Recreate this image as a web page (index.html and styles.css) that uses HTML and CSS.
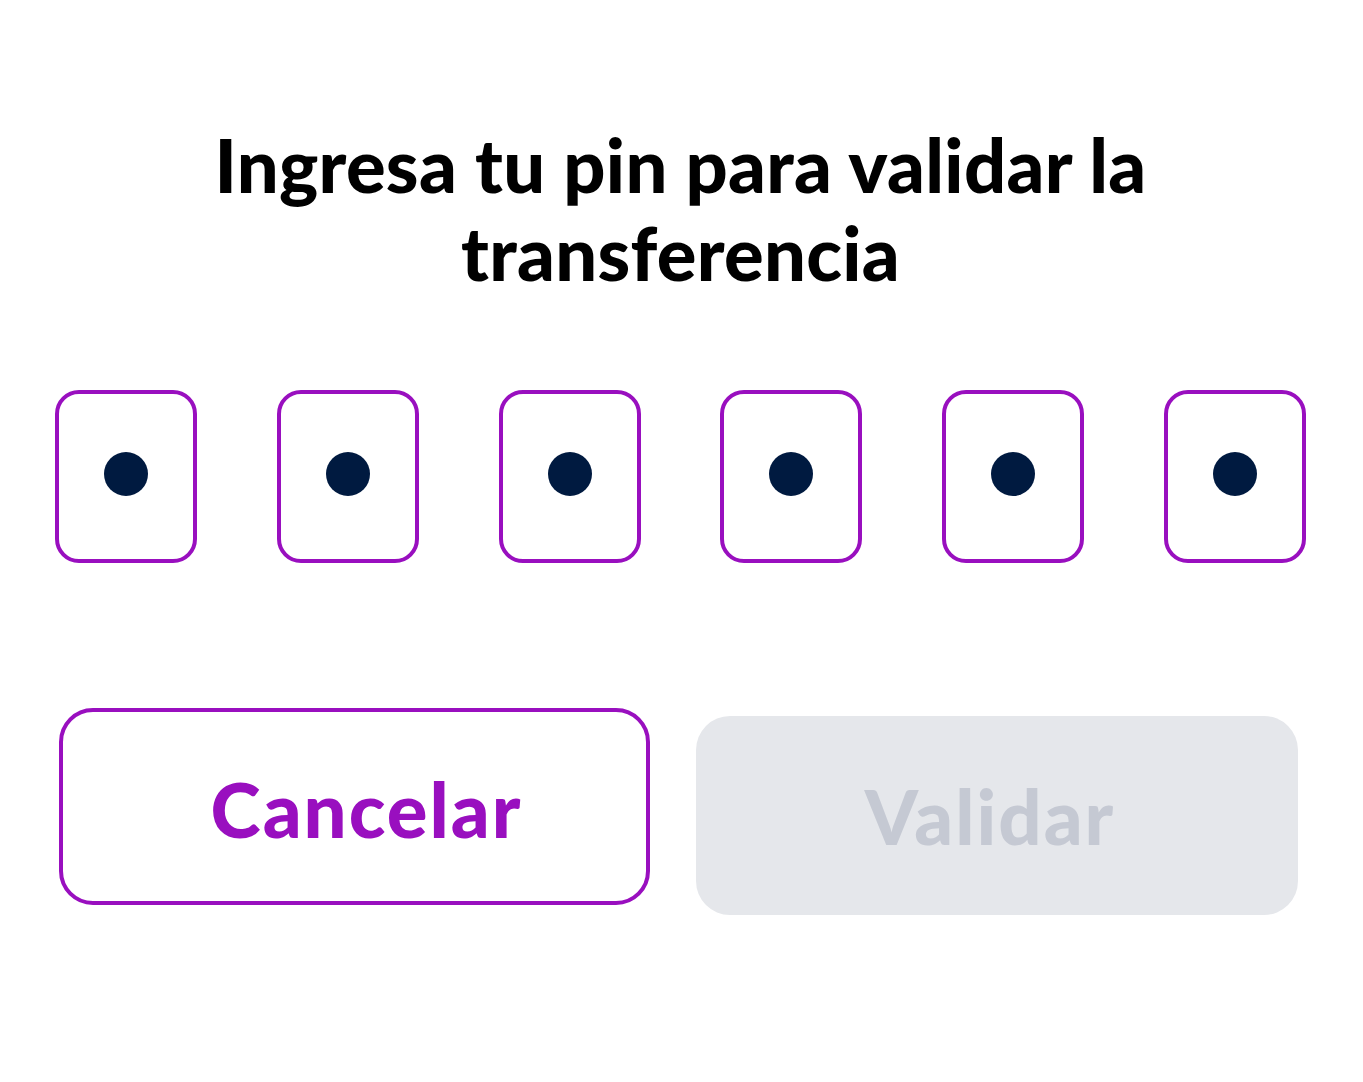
FILE: index.html
```html
<!DOCTYPE html>
<html lang="es">
<head>
<meta charset="UTF-8">
<meta name="viewport" content="width=device-width, initial-scale=1.0">
<title>Validar transferencia</title>
<link rel="stylesheet" href="styles.css">
</head>
<body>
<div class="screen">
  <h1 class="title">Ingresa tu pin para validar la transferencia</h1>

  <div class="pin-row">
    <div class="pin-box"><span class="dot"></span></div>
    <div class="pin-box"><span class="dot"></span></div>
    <div class="pin-box"><span class="dot"></span></div>
    <div class="pin-box"><span class="dot"></span></div>
    <div class="pin-box"><span class="dot"></span></div>
    <div class="pin-box"><span class="dot"></span></div>
  </div>

  <div class="actions">
    <button class="btn btn-cancel">Cancelar</button>
    <button class="btn btn-validate" disabled>Validar</button>
  </div>
</div>
</body>
</html>
```

FILE: styles.css
```css
body {
  font-family: "Lato", "Inter", sans-serif;
  background-color: #ffffff;
  color: #000000;
  margin: 0;
  padding: 0;
}
.screen {
  padding: 0 57px 0 55px;
}
.title {
  margin: 121px auto 0;
  max-width: 1000px;
  font-size: 74px;
  font-weight: 900;
  line-height: 88px;
  text-align: center;
  letter-spacing: 0.3px;
}
.pin-row {
  display: flex;
  justify-content: space-between;
  margin-top: 93px;
}
.pin-box {
  width: 142px;
  height: 173px;
  box-sizing: border-box;
  border: 4px solid #990fbf;
  border-radius: 24px;
  display: flex;
  align-items: center;
  justify-content: center;
}
.dot {
  width: 44px;
  height: 44px;
  border-radius: 50%;
  background-color: #001a40;
  margin-bottom: 6px;
}
.actions {
  display: grid;
  grid-template-columns: 591px 602px;
  column-gap: 46px;
  align-items: start;
  margin-top: 145px;
  padding-left: 4px;
}
.btn {
  font-family: inherit;
  font-size: 76px;
  font-weight: 900;
  letter-spacing: 2px;
  border-radius: 34px;
  cursor: pointer;
  padding: 0;
}
.btn-cancel {
  height: 197px;
  border: 4px solid #990fbf;
  background-color: #ffffff;
  color: #990fbf;
  padding: 4px 0 0 24px;
}
.btn-validate {
  height: 199px;
  margin-top: 8px;
  border: none;
  background-color: #e5e7eb;
  color: #c5c9d3;
  cursor: default;
  padding: 0 14px 0 0;
}
```
